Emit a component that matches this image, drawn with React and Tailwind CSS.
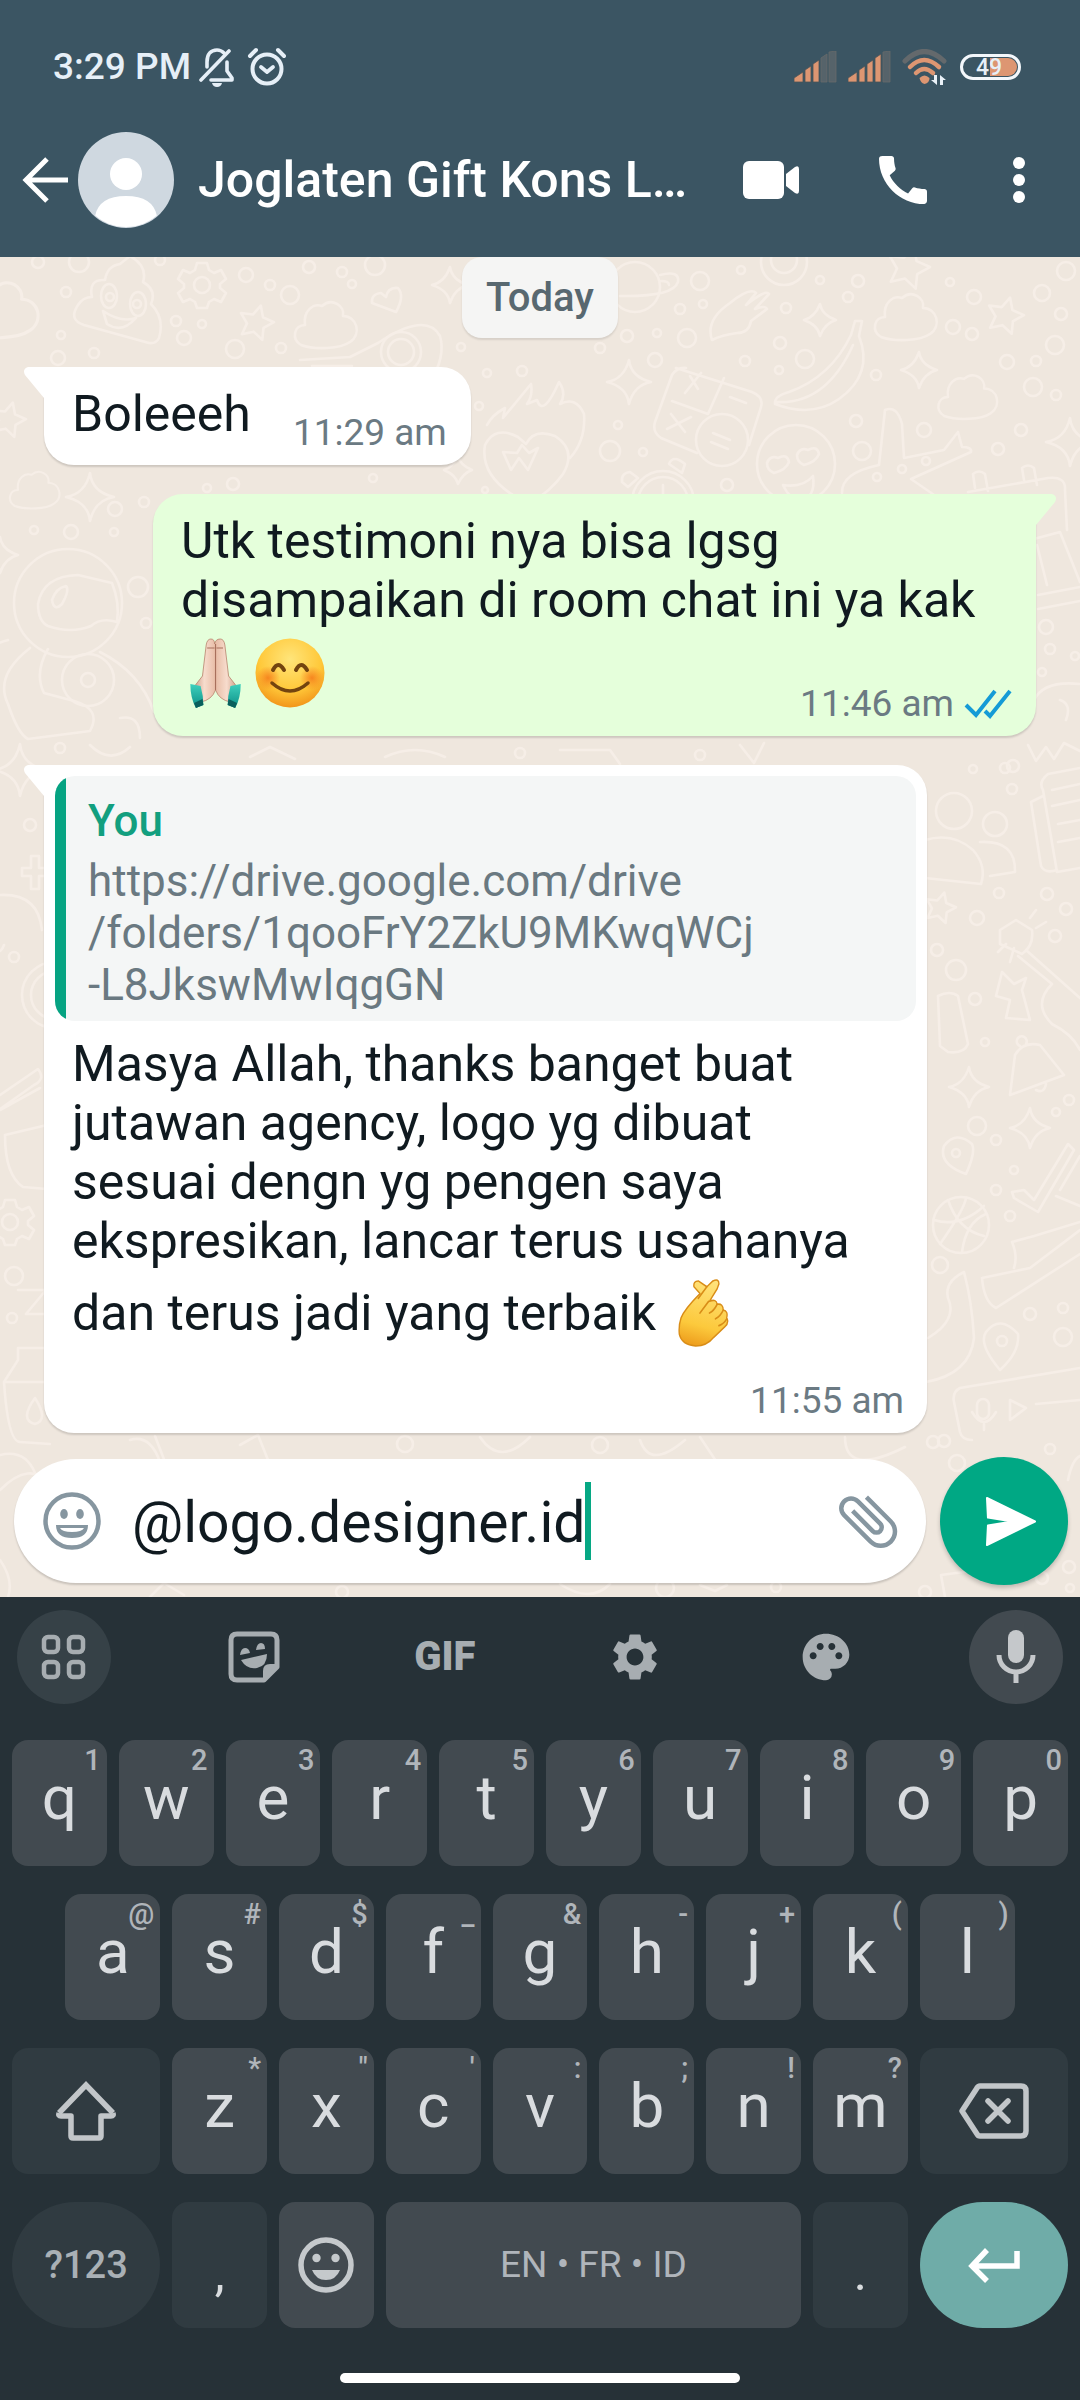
/* eslint-disable react/prop-types */
import { MdAttachFile, MdCall, MdMic, MdPalette, MdSettings } from "react-icons/md";

const topRow = [
    ["q", "1"], ["w", "2"], ["e", "3"], ["r", "4"], ["t", "5"],
    ["y", "6"], ["u", "7"], ["i", "8"], ["o", "9"], ["p", "0"],
];

const middleRow = [
    ["a", "@"], ["s", "#"], ["d", "$"], ["f", "_"], ["g", "&"],
    ["h", "-"], ["j", "+"], ["k", "("], ["l", ")"],
];

const bottomRow = [
    ["z", "*"], ["x", '"'], ["c", "'"], ["v", ":"], ["b", ";"], ["n", "!"], ["m", "?"],
];

// wallpaper doodles: [x, y, radius]
const dots = [
    [38, 262, 6], [79, 262, 10], [160, 260, 5], [246, 275, 7], [66, 292, 5], [309, 267, 6],
    [342, 272, 5], [270, 285, 5], [352, 284, 4], [375, 265, 10], [290, 295, 9], [176, 321, 5],
    [202, 324, 4], [61, 335, 4], [184, 338, 7], [58, 358, 7], [94, 353, 5], [235, 349, 9],
    [281, 348, 5], [461, 347, 4], [487, 373, 4], [522, 371, 5], [479, 406, 4], [233, 484, 6],
    [207, 488, 4], [144, 502, 5], [115, 509, 7], [34, 530, 4], [71, 532, 7], [114, 532, 4],
    [138, 587, 10], [146, 623, 5], [373, 478, 4], [485, 490, 3], [700, 281, 9], [741, 270, 4],
    [820, 280, 4], [858, 281, 6], [950, 282, 4], [974, 297, 7], [848, 297, 5], [680, 309, 5],
    [703, 304, 4], [786, 308, 5], [627, 336, 6], [657, 333, 4], [687, 338, 9], [780, 343, 6],
    [805, 359, 9], [600, 348, 5], [655, 360, 7], [745, 361, 5], [779, 370, 4], [876, 375, 5],
    [953, 327, 7], [972, 334, 6], [1066, 271, 9], [1042, 293, 8], [1061, 314, 6], [1055, 345, 9],
    [1007, 362, 7], [1036, 361, 5], [1033, 387, 9], [1056, 395, 5], [856, 421, 6], [924, 430, 7],
    [1021, 430, 6], [998, 449, 6], [862, 451, 9], [618, 425, 4], [610, 451, 10], [643, 452, 4],
    [727, 485, 6], [926, 461, 4], [902, 469, 4], [877, 477, 4], [1046, 627, 7], [1050, 649, 5],
    [1075, 656, 4], [1042, 672, 4], [30, 825, 6], [14, 957, 5], [14, 1276, 9], [12, 1318, 5],
    [1013, 766, 6], [1005, 768, 5], [973, 769, 4], [1012, 789, 5], [999, 893, 5], [1047, 894, 6],
    [1066, 909, 6], [977, 918, 7], [1055, 936, 6], [937, 950, 6], [956, 970, 10], [975, 999, 6],
    [985, 1042, 4], [1069, 1100, 5], [1056, 1112, 4], [977, 1126, 9], [996, 1140, 5],
    [1014, 1170, 4], [996, 1190, 5], [1010, 1216, 5], [940, 1265, 8], [1030, 1314, 6],
    [1063, 1308, 5], [1063, 1337, 9], [944, 1441, 6], [405, 1444, 8], [600, 1445, 8],
    [342, 1592, 6], [520, 753, 5], [700, 755, 5], [60, 748, 5], [1050, 1449, 5], [933, 1442, 6],
    [957, 1463, 8], [1069, 1567, 6], [1070, 1588, 4], [1042, 1578, 6], [925, 1592, 6], [665, 1588, 9],
    [776, 1587, 5],
];

const sparkles = [
    [450, 285, 18], [458, 470, 14], [90, 497, 24], [0, 555, 18], [820, 320, 16], [629, 382, 22],
    [919, 370, 18], [1070, 442, 24], [20, 770, 26], [969, 1087, 20], [1030, 1128, 20],
];

const stars = [
    [256, 323, 18], [8, 420, 18], [908, 268, 22], [1005, 316, 19], [940, 908, 16],
];

const clouds = [
    [325, 325, 1], [34, 490, 0.8], [905, 317, 1], [967, 397, 0.95], [0, 310, 1.2],
];

function starPoints(x, y, r) {
    const points = [];
    for (let i = 0; i < 10; i++) {
        const radius = i % 2 ? r * 0.5 : r;
        const angle = (Math.PI / 5) * i - 1.3;
        points.push(`${x + radius * Math.cos(angle)},${y + radius * Math.sin(angle)}`);
    }
    return points.join(" ");
}

function Gear({ x, y }) {
    return (
        <g transform={`translate(${x} ${y})`}>
            <circle r="8" />
            <path d="M-5-22h10l2 7 5 3 7-3 5 9-6 5v4l6 5-5 9-7-3-5 3-2 6h-10l-2-6-5-3-7 3-5-9 6-5v-4l-6-5 5-9 7 3 5-3z" />
        </g>
    );
}

function Wallpaper() {
    return (
        <svg
            className="absolute inset-0 h-full w-full"
            viewBox="0 257 1080 1340"
            preserveAspectRatio="xMidYMin slice"
            fill="none"
            stroke="#f6eee7"
            strokeWidth="2.6"
            strokeLinejoin="round"
            strokeLinecap="round"
            aria-hidden="true"
        >
            {dots.map(([x, y, r]) => (
                <circle key={`${x}-${y}`} cx={x} cy={y} r={r} />
            ))}
            {sparkles.map(([x, y, r]) => (
                <path
                    key={`${x}-${y}`}
                    d={`M${x} ${y - r}q2 ${r - 5} ${r} ${r}q${5 - r} 3 ${-r} ${r}q-2 ${5 - r} ${-r} ${-r}q${r - 5}-3 ${r} ${-r}z`}
                />
            ))}
            {stars.map(([x, y, r]) => (
                <polygon key={`${x}-${y}`} points={starPoints(x, y, r)} />
            ))}
            {clouds.map(([x, y, s]) => (
                <path
                    key={`${x}-${y}`}
                    transform={`translate(${x} ${y}) scale(${s})`}
                    d="M-24 20c-10-6-7-20 4-20-2-14 8-22 17-19 10-9 23 0 21 10 14 0 19 18 7 26-10 7-35 8-49 3z"
                />
            ))}
            <Gear x={202} y={285} />
            <Gear x={10} y={1222} />
            {/* smiling pile */}
            <path d="M105 280q2-14 15-16l10-8q18 10 13 26 14 8 8 22 14 14 8 34-3 6-10 5l-65-18q-16-5-6-20 5-8 14-8-4-18 13-17zM103 311q18 12 33 7-14 16-29 6z" />
            <ellipse cx="109" cy="296" rx="8" ry="12" />
            <ellipse cx="138" cy="304" rx="8" ry="12" />
            <circle cx="110" cy="297" r="4" />
            <circle cx="137" cy="304" r="4" />
            {/* hearts */}
            <path d="M372 303q-1-9 9-10l5 4q2-10 12-9 7 8-2 24l-24-9" />
            <path d="M485 445q10-20 33-8l8 7q8-16 29-8 22 14 8 38-12 17-34 30-50-24-44-59zM503 452l8 18 8-12 9 12 10-22-9 5-7-8-5 8z" />
            <path d="M487 425q5-10 18-17l-2 10 28-34q2 12-4 20l10-4q6 18 22-18 8 12 1 22 16-8 24 10 2 26-14 44" />
            {/* avocado */}
            <path d="M300 360l50-3 28-14q48-32 62-7 6 20-10 47M312 366h40" />
            <circle cx="401" cy="352" r="20" />
            <circle cx="401" cy="352" r="13" />
            {/* saturn */}
            <circle cx="635" cy="287" r="25" />
            <path d="M660 275q20-5 18 7-5 15-58 14M661 281q8 0 8 4" />
            <circle cx="784" cy="262" r="23" />
            <circle cx="784" cy="260" r="13" />
            {/* glove */}
            <path d="M712 340q-7-20 18-37 20-16 26-10l-10 12q20-16 23-11l-14 15q10-4 12 0l-16 12q-2 12-14 12-15 2-25 7z" />
            {/* banana */}
            <path d="M855 321l-4 14q-20 42-62 57-15 4-14 12 37 14 64-5 35-25 20-63l3-15zM776 402q50 3 77-57" />
            {/* calculator */}
            <path d="M676 368l76 24q12 5 9 15l-12 38M697 453l-36-15q-9-6-6-16l17-47q5-8 14-7M724 378l-16 36-36-13M690 376l8 13m3-16l-16 20M730 397l16 6M671 414l14 18m6-15l-24 12" />
            <circle cx="722" cy="440" r="26" />
            <path d="M713 433l17 7m-19 2l17 7" />
            {/* face with heart eyes */}
            <circle cx="796" cy="464" r="39" />
            <path d="M767 463q3-8 11-5 9-5 11 4-3 8-15 11-7-3-7-10zM797 455q3-8 11-5 9-5 11 4-3 8-15 11-7-3-7-10zM783 485q20 3 30-9 3 22-13 24-10 0-17-15z" />
            {/* scissors */}
            <path d="M842 493q-1-20 37-28l6-55q12-5 17 14l2 34 40-8 14-18 4 15q10 0 9 5l-60 27 29 20" />
            {/* alarm clock */}
            <circle cx="663" cy="502" r="31" />
            <circle cx="663" cy="502" r="25" />
            <path d="M669 464q4-10 16 0l-3 9zM622 482q-1-9 8-10l8 6-10 9zM663 485v12h8" />
            <path d="M968 492l80-14q18-2 17 12l2 40M975 488l-2-14q6-5 12 0l3 17M1024 480l-2-12q6-5 12 0l3 17M1030 540l30-8 20 50M1037 545l10 40" />
            <path d="M1038 595l42-8m-42 22l42-8M1028 745l8 16 10-14 8 12 10-16 16 8M1034 700q10-20 46-16M1060 700q12 4 6 20" />
            {/* astronaut */}
            <circle cx="68" cy="603" r="54" />
            <path d="M48 626q-10-5-10-22 5-28 40-29l34 8q8 20 5 39-16-5-26 4-20 8-43 0zM52 600q4-12 14-14 4 4-4 18-8 8-10-4z" />
            <path d="M30 648q-36 28-22 56 10 30 20 35l62-8q12-22-16-30l-30-8q-10-20 4-44M100 652q40 20 54 60M8 640q-20 5-26 20M120 718q20-4 20 20" />
            <circle cx="88" cy="680" r="26" />
            <circle cx="88" cy="680" r="7" />
            {/* left edge */}
            <path d="M22 868h9v-12h8v12h9v8h-9v13h-8v-13h-9zM0 895q38-2 42 35M-10 940q8 20 14 5" />
            <circle cx="55" cy="995" r="33" />
            <circle cx="55" cy="995" r="24" />
            <path d="M0 1095l38-26q8 10-4 16l-34 24M0 1110l40-22M5 1135l42-10M5 1135q0 40 18 52l24 2M18 1290h28l-20 24h22" />
            <path d="M4 1382l14-22v-12h26M4 1382q4 60 16 60l30 2M4 1382h40M35 1398q-16 22 0 26 14-4 0-26z" />
            <path d="M0 1455q25-6 35 18M130 1440q20-6 30 22M155 1436l10 26M480 1437q20 30 50 0M240 1445l18-10 12 30M640 1440q10 30 45 0M700 1437l20 30M845 1437q0 40 60 10" />
            <path d="M385 757q30-14 60 0M250 757l20-10 25 12M560 750h50l10 14M740 745l14 18 10-20M90 745q20 20 40 2" />
            {/* right edge */}
            <circle cx="954" cy="811" r="18" />
            <circle cx="995" cy="824" r="12" />
            <path d="M925 840q28-8 48 10 14 16 8 34l-56-6M980 842q36-2 35 30l-25 4" />
            <path d="M1080 768l-32 6q-10 8-5 16l14 82 23-4M1043 796l-12 6 10 64q4 8 16 4M1052 790l28-6m-28 22l28-6m-22 24l22-4m-22 22l22-4" />
            <path d="M1000 930l16-10 16 10q2 16-10 24l-22-10zM1026 950l54 48M1018 956l34 28q-20 20 0 40 20 10 28 26M1006 944l-8 8m16-4l-4 14m20-44l6-8m0 18l10-6" />
            <path d="M1002 972l-6 24 14 4-4 18 24 2-8-30 4-12-12 6zM938 996q12-6 20 0l10 48q-4 10-20 8l-8-6z" />
            <path d="M1010 1095l5-40q8-14 25-10l24 30zM1020 1046a5 5 0 1 1 6-2M1036 1090q8 4 10-6" />
            <path d="M966 1174q-28-10-22-28 12-16 28-2 4 8-6 30zM1000 1370q-22-26-14-38 14-18 32 2 2 18-18 36z" />
            <circle cx="956" cy="1153" r="4" />
            <circle cx="1002" cy="1341" r="5" />
            <path d="M1012 1192l12-2 10 10 34-56 6 6-36 62-24-14zM1056 1196l24 10M1060 1190l20-34" />
            <circle cx="961" cy="1225" r="28" />
            <path d="M934 1220q26 8 50-14M940 1244q24-34 26-46M962 1252q4-30 24-38M948 1200q10 30 36 36" />
            <path d="M982 1278l48-10 50-38M982 1278q2 24 14 30l84-54M1012 1242l22-6 46-14M1012 1242q6 14 2 26" />
            <path d="M964 1272q-20 10-16 26 10 22-20 40M964 1272q8 30 10 66-4 36-48 44" />
            <path d="M1080 1368l-120 20q-8 4-6 14l6 30q2 8 12 8M1010 1400v20l16-12zM1036 1404l44-4" />
            <rect x="977" y="1399" width="12" height="20" rx="6" />
            <path d="M972 1412q12 20 24 0M984 1424v6" />
            <path d="M0 1490q30-30 50-6M0 1560q14 20 8 37M1068 1480q4-20 12-24M150 1597l14-14 20 12M560 1584q30 20 50 0M700 1585l15 6 12-6M945 1597l-4-22 30-4" />
        </svg>
    );
}

function SignalIcon({ level }) {
    const bars = ["M0 27l9-6v10H0z", "M11 19l6-4v16h-6z", "M19 13l6-4v22h-6z", "M27 7l6-4v28h-6z", "M35 1l7-1v31h-7z"];
    return (
        <svg className="h-8 w-11" viewBox="0 0 44 32" aria-hidden="true">
            {bars.map((d, index) => (
                <path
                    key={d}
                    d={d}
                    fill={index < level ? "#dd9672" : "#56636a"}
                    stroke={index < level ? "#4c5357" : "#67696a"}
                    strokeWidth="0.8"
                />
            ))}
        </svg>
    );
}

function WifiIcon() {
    return (
        <svg className="h-9 w-12" viewBox="0 0 48 36" fill="none" strokeLinecap="round" aria-hidden="true">
            <path d="M3 12Q22-7 42 12" stroke="#64696c" strokeWidth="5" />
            <path d="M8 18Q22 4 37 18" stroke="#dd9672" strokeWidth="4.5" />
            <path d="M14 24q8-8 17 0" stroke="#dd9672" strokeWidth="4.5" />
            <path d="M17.500 29q5-5 10 0 0 5-5 6-4-1-5-6z" fill="#dd9672" />
            <path d="M35 26v10l-6-5h3v-5zM38 36V26l6 5h-3v5z" fill="#eaf1f8" />
        </svg>
    );
}

function StatusBar() {
    return (
        <div className="flex h-[50px] items-center pl-[53px] pr-[59px] text-[#e6eff7]">
            <span className="text-[37px] font-medium leading-[50px]">3:29 PM</span>
            <svg className="ml-2 h-10 w-9" viewBox="0 0 36 40" fill="none" stroke="currentColor" strokeWidth="3.6" strokeLinejoin="round" strokeLinecap="round" aria-hidden="true">
                <path d="M2 33L30 4" />
                <path d="M8 20v-5C8 7 12 3 18 3c3 0 5 1 7 3" />
                <path d="M28 15v9l5 7v2H12" />
                <path d="M13 36h10q-1 4-5 4t-5-4z" fill="currentColor" stroke="none" />
            </svg>
            <svg className="ml-3 h-10 w-10" viewBox="0 0 40 40" fill="none" stroke="currentColor" strokeLinecap="round" strokeLinejoin="round" aria-hidden="true">
                <circle cx="20" cy="22" r="14.500" strokeWidth="4" />
                <path d="M14 20l6 5 6-5" strokeWidth="3.800" />
                <path d="M3 9l6-6M37 9l-6-6" strokeWidth="4" />
            </svg>
            <div className="ml-auto flex items-center gap-[10px]">
                <SignalIcon level={3} />
                <SignalIcon level={4} />
                <WifiIcon />
                <span className="flex h-[26px] w-[61px] rounded-full border-[3px] border-[#f3f7fb] p-px">
                    <span className="w-full rounded-full bg-linear-to-r from-transparent from-50% to-[#dd9672] to-50% pl-3 text-[23px] font-medium leading-[20px]">
                        49
                    </span>
                </span>
            </div>
        </div>
    );
}

function ChatHeader() {
    return (
        <header className="bg-[#3b5563] pb-[29px] pt-[42px] text-white">
            <StatusBar />
            <div className="mt-10 flex items-center pl-[22px] pr-[55px]">
                <button type="button" aria-label="Back">
                    <svg className="h-12 w-12" viewBox="0 0 48 48" fill="none" stroke="currentColor" strokeWidth="5" aria-hidden="true">
                        <path d="M25 3L4 24l21 21M4 24h42" />
                    </svg>
                </button>
                <svg className="ml-2 size-24 shrink-0" viewBox="0 0 96 96" aria-hidden="true">
                    <clipPath id="avatar">
                        <circle cx="48" cy="48" r="47" />
                    </clipPath>
                    <circle cx="48" cy="48" r="48" fill="#cfd8e0" />
                    <circle cx="48" cy="42" r="16" fill="#fff" />
                    <path clipPath="url(#avatar)" d="M17 84q4-20 31-20t31 20v12H17z" fill="#fff" />
                </svg>
                <h1 className="ml-6 min-w-0 flex-1 truncate text-[50px] font-medium leading-[60px]">
                    Joglaten Gift Kons L…
                </h1>
                <div className="flex items-center">
                    <button type="button" aria-label="Video call">
                        <svg className="h-[38px] w-14" viewBox="0 0 56 38" fill="currentColor" aria-hidden="true">
                            <rect y="0" width="41" height="38" rx="6" />
                            <path d="M43 13l9-7q4-2 4 2v22q0 4-4 2l-9-7z" />
                        </svg>
                    </button>
                    <button type="button" aria-label="Voice call" className="ml-20">
                        <MdCall className="size-16 -mx-2" />
                    </button>
                    <button type="button" aria-label="More options" className="ml-[86px]">
                        <svg className="h-12 w-3" viewBox="0 0 12 48" fill="currentColor" aria-hidden="true">
                            <circle cx="6" cy="7" r="6" />
                            <circle cx="6" cy="24" r="6" />
                            <circle cx="6" cy="41" r="6" />
                        </svg>
                    </button>
                </div>
            </div>
        </header>
    );
}

function FoldedHands() {
    return (
        <svg className="size-[70px]" viewBox="-2 0 75 70" preserveAspectRatio="none" role="img" aria-label="folded hands">
            <defs>
                <linearGradient id="palm" x1="0" x2="1">
                    <stop offset="0" stopColor="#c9977f" />
                    <stop offset="0.250" stopColor="#f7dccd" />
                    <stop offset="0.480" stopColor="#e9bfa9" />
                    <stop offset="0.520" stopColor="#e9bfa9" />
                    <stop offset="0.750" stopColor="#f7dccd" />
                    <stop offset="1" stopColor="#c9977f" />
                </linearGradient>
                <linearGradient id="cuff" x1="0" y1="0" x2="0" y2="1">
                    <stop offset="0" stopColor="#3fd0bd" />
                    <stop offset="1" stopColor="#0b8f86" />
                </linearGradient>
            </defs>
            <path d="M34 6q0-5-4-5-4 0-5 6l-4 31-10 12 8 14q12-2 16-12 4 10 16 12l8-14-10-12-4-31q-1-6-5-6-5 0-6 5z" fill="url(#palm)" stroke="#b5806a" strokeWidth="0.8" />
            <path d="M35 6v46M26 10h8m2 0h7" stroke="#a8705c" strokeWidth="1.2" fill="none" />
            <path d="M8 46l11 2q3 10 3 19l-8 3q-6-10-6-24zM62 46l-11 2q-3 10-3 19l8 3q6-10 6-24z" fill="url(#cuff)" />
            <path d="M14 70l8-3-1-6-9 4zM56 70l-8-3 1-6 9 4z" fill="#0a5f5c" />
        </svg>
    );
}

function SmilingFace() {
    return (
        <svg className="size-[70px]" viewBox="0 0 70 70" role="img" aria-label="smiling face">
            <defs>
                <radialGradient id="face" cx="0.5" cy="0.3" r="0.7">
                    <stop offset="0" stopColor="#ffe57a" />
                    <stop offset="0.65" stopColor="#ffc839" />
                    <stop offset="1" stopColor="#f2951a" />
                </radialGradient>
                <radialGradient id="cheek">
                    <stop offset="0" stopColor="#f57f1c" stopOpacity="0.9" />
                    <stop offset="1" stopColor="#f57f1c" stopOpacity="0" />
                </radialGradient>
            </defs>
            <circle cx="35" cy="35" r="34.500" fill="url(#face)" />
            <circle cx="13" cy="40" r="12" fill="url(#cheek)" />
            <circle cx="57" cy="40" r="12" fill="url(#cheek)" />
            <g fill="none" stroke="#73440f" strokeLinecap="round">
                <path d="M18 32q5-10 11 0M41 32q5-10 11 0" strokeWidth="4" />
                <path d="M17 45q18 16 36 0" strokeWidth="3.500" />
            </g>
        </svg>
    );
}

function FingerHeart() {
    return (
        <svg className="my-2 inline size-[68px] align-[-25px]" viewBox="-2 0 79 70" preserveAspectRatio="none" role="img" aria-label="hand with index finger and thumb crossed">
            <defs>
                <linearGradient id="hand" x1="0.600" y1="0" x2="0.400" y2="1">
                    <stop offset="0" stopColor="#ffe27a" />
                    <stop offset="0.700" stopColor="#fcc93c" />
                    <stop offset="1" stopColor="#ee9f1e" />
                </linearGradient>
            </defs>
            <path
                d="M34 15l-7-7q-1-6 5-6l10 6 7-6q7-3 7 3l-2 5-9 13q8-3 9 3 7-1 7 6 6 1 4 8 3 5-2 9L50 60q-8 9-21 9-16-1-19-12-1-9 2-17 4-9 22-25z"
                fill="url(#hand)"
                stroke="#d98d17"
                strokeWidth="1.600"
                strokeLinejoin="round"
            />
            <path d="M44 23l-10 12M54 26q-4 7-9 9m16-3q-3 6-9 9m13 0q-3 5-9 7M42 8L32 20" fill="none" stroke="#d98d17" strokeWidth="1.800" strokeLinecap="round" />
        </svg>
    );
}

function Bubble({ sent, children }) {
    return (
        <article
            className={
                sent
                    ? "relative max-w-[883px] self-end rounded-[30px] rounded-tr-none bg-[#e5ffdb] pb-[10px] shadow-[0_2px_2px_rgba(0,0,0,0.14)]"
                    : "relative max-w-[883px] self-start rounded-[30px] rounded-tl-none bg-white pb-[10px] shadow-[0_2px_2px_rgba(0,0,0,0.14)]"
            }
        >
            <svg
                className={sent ? "absolute left-full top-0 h-8 w-5 text-[#e5ffdb]" : "absolute right-full top-0 h-8 w-5 -scale-x-100 text-white"}
                viewBox="0 0 20 32"
                fill="currentColor"
                aria-hidden="true"
            >
                <path d="M0 0h16q6 2 3 8L0 31z" />
            </svg>
            {children}
        </article>
    );
}

function Time({ children }) {
    return <time className="text-[37px] leading-[44px] text-[#6b7a83]">{children}</time>;
}

function Chat() {
    return (
        <section className="flex flex-col items-center gap-[29px] px-11">
            <div className="rounded-[20px] bg-[#f5f5f4] px-6 py-[15px] text-[40px] font-medium leading-[51px] text-[#586870] shadow-[0_2px_2px_rgba(0,0,0,0.1)]">
                Today
            </div>

            <Bubble>
                <div className="flex items-end gap-[42px] pl-7 pr-6 pt-[18px]">
                    <p className="pb-[11px] text-[50px] leading-[59px]">Boleeeh</p>
                    <Time>11:29 am</Time>
                </div>
            </Bubble>

            <Bubble sent>
                <div className="pl-7 pr-6 pt-[18px]">
                    <p className="text-[50px] leading-[59px]">
                        Utk testimoni nya bisa lgsg disampaikan di room chat ini ya kak
                    </p>
                    <div className="flex items-end justify-between">
                        <div className="flex gap-1 pb-[18px] pt-2">
                            <FoldedHands />
                            <SmilingFace />
                        </div>
                        <div className="flex items-center gap-[10px]">
                            <Time>11:46 am</Time>
                            <svg className="h-8 w-12" viewBox="0 0 48 32" fill="none" stroke="#159bd6" strokeWidth="4" role="img" aria-label="Read">
                                <path d="M2 17l10 10L31 3M21 23l5 5L46 3" />
                            </svg>
                        </div>
                    </div>
                </div>
            </Bubble>

            <Bubble>
                <div className="px-[11px] pt-[11px]">
                    <blockquote className="overflow-hidden rounded-[20px] bg-[#f4f6f6]">
                        <div className="border-l-[11px] border-[#06a382] pb-[10px] pl-[22px] pt-[19px] text-[44px] leading-[52px]">
                            <p className="font-medium text-[#129f7f]">You</p>
                            <p className="mt-2 text-[#6a7981]">
                                https://drive.google.com/drive
                                <br />
                                /folders/1qooFrY2ZkU9MKwqWCj
                                <br />
                                -L8JkswMwIqgGN
                            </p>
                        </div>
                    </blockquote>
                    <p className="mt-[14px] px-[17px] text-[50px] leading-[59px]">
                        Masya Allah, thanks banget buat jutawan agency, logo yg dibuat sesuai dengn yg
                        pengen saya ekspresikan, lancar terus usahanya dan terus jadi yang terbaik{" "}
                        <FingerHeart />
                    </p>
                    <div className="mt-6 flex justify-end pr-3">
                        <Time>11:55 am</Time>
                    </div>
                </div>
            </Bubble>
        </section>
    );
}

function Composer() {
    return (
        <form className="mt-6 flex items-center gap-[14px] pb-3 pl-[14px] pr-3" onSubmit={(event) => event.preventDefault()}>
            <div className="flex h-[124px] min-w-0 flex-1 items-center rounded-full bg-white pl-[28px] pr-[22px] text-[#8696a0] shadow-[0_2px_2px_rgba(0,0,0,0.16)]">
                <button type="button" aria-label="Emoji">
                    <svg className="size-[60px]" viewBox="0 0 60 60" fill="currentColor" aria-hidden="true">
                        <circle cx="30" cy="30" r="26.500" fill="none" stroke="currentColor" strokeWidth="4.500" />
                        <ellipse cx="22" cy="23" rx="3.800" ry="5" />
                        <ellipse cx="38" cy="23" rx="3.800" ry="5" />
                        <path d="M14 34h32q0 13-16 13T14 34z" />
                        <path d="M18 37h24q-2 4-12 4t-12-4z" fill="#fff" />
                    </svg>
                </button>
                {/* the input is as wide as its text so the caret bar follows it */}
                <input
                    type="text"
                    aria-label="Message"
                    defaultValue="@logo.designer.id"
                    className="ml-[30px] field-sizing-content min-w-0 pt-1 text-[57px] leading-[76px] text-[#101a20] outline-none"
                />
                <span className="h-[78px] w-[6px] shrink-0 bg-[#06a884]" />
                <button type="button" aria-label="Attach" className="ml-auto">
                    <MdAttachFile className="size-[72px] -rotate-45" />
                </button>
            </div>
            <button type="submit" aria-label="Send" className="flex size-32 shrink-0 items-center justify-center rounded-full bg-[#00a884] text-white shadow-[0_3px_4px_rgba(0,0,0,0.2)]">
                <svg className="ml-3 size-[51px]" viewBox="0 0 52 52" fill="currentColor" stroke="currentColor" strokeWidth="2" strokeLinejoin="round" aria-hidden="true">
                    <path d="M2 2l49 24L2 50l1-20 25-4L3 22z" />
                </svg>
            </button>
        </form>
    );
}

function Key({ letter, hint }) {
    return (
        <button type="button" className="relative col-span-2 mx-1.5 h-[126px] rounded-2xl bg-[#424a50] pb-3 text-[62px] text-[#d9dcdf]">
            {letter}
            <span className="absolute right-[6px] top-[5px] text-[29px] font-medium leading-[30px] text-[#b0b5ba]">{hint}</span>
        </button>
    );
}

function Toolbar() {
    return (
        <div className="flex justify-between px-[17px] text-[#a7adb1]">
            <button type="button" aria-label="Menu" className="flex size-[94px] items-center justify-center rounded-full bg-[#364147]">
                <svg className="size-[46px]" viewBox="0 0 46 46" fill="none" stroke="currentColor" strokeWidth="4.500" aria-hidden="true">
                    <rect x="3" y="3" width="14" height="15" rx="4" />
                    <rect x="28" y="3" width="14" height="15" rx="4" />
                    <rect x="3" y="28" width="14" height="15" rx="4" />
                    <rect x="28" y="28" width="14" height="15" rx="4" />
                </svg>
            </button>
            <button type="button" aria-label="Stickers" className="flex size-[94px] items-center justify-center">
                <svg className="size-[52px]" viewBox="0 0 52 52" fill="none" stroke="currentColor" strokeWidth="5" strokeLinejoin="round" aria-hidden="true">
                    <path d="M9 3h34q6 0 6 6v27L36 49H9q-6 0-6-6V9q0-6 6-6z" />
                    <path d="M49 34h-7q-6 0-6 6v9z" fill="currentColor" strokeWidth="2" />
                    <path d="M12 24q1-7 5-7t5 5zM28 19q1-7 5-7t4 6zM13 29l26-6q0 12-10 14-10 2-16-8z" fill="currentColor" stroke="none" />
                </svg>
            </button>
            <button type="button" className="size-[94px] text-[40px] font-black">
                GIF
            </button>
            <button type="button" aria-label="Settings" className="flex size-[94px] items-center justify-center">
                <MdSettings className="size-14" />
            </button>
            <button type="button" aria-label="Theme" className="flex size-[94px] items-center justify-center">
                <MdPalette className="size-14" />
            </button>
            <button type="button" aria-label="Voice typing" className="flex size-[94px] items-center justify-center rounded-full bg-[#424a50] text-[#c5c8cb]">
                <svg className="h-[54px] w-10" viewBox="0 0 40 54" fill="none" stroke="currentColor" strokeWidth="5" aria-hidden="true">
                    <rect x="12" y="0" width="16" height="33" rx="8" fill="currentColor" stroke="none" />
                    <path d="M3 25a17 17 0 0 0 34 0M20 41v12" />
                </svg>
            </button>
        </div>
    );
}

function Keyboard() {
    return (
        <section aria-label="Keyboard" className="bg-[#263137] pb-[17px] pt-[13px]">
            <Toolbar />
            <div className="mt-9 grid grid-cols-20 gap-y-7 px-1.5">
                {topRow.map(([letter, hint]) => (
                    <Key key={letter} letter={letter} hint={hint} />
                ))}

                <span />
                {middleRow.map(([letter, hint]) => (
                    <Key key={letter} letter={letter} hint={hint} />
                ))}
                <span />

                <button type="button" aria-label="Shift" className="col-span-3 mx-1.5 flex h-[126px] items-center justify-center rounded-2xl bg-[#303b41] text-[#c2c6c9]">
                    <svg className="h-[60px] w-[62px]" viewBox="0 0 62 60" fill="none" stroke="currentColor" strokeWidth="5.500" strokeLinejoin="round" aria-hidden="true">
                        <path strokeLinejoin="miter" d="M4 32L31 4l27 28" />
                        <path d="M4 32q-1 3 2 3h10v20q0 2 2 2h26q2 0 2-2V35h10q3 0 2-3" />
                    </svg>
                </button>
                {bottomRow.map(([letter, hint]) => (
                    <Key key={letter} letter={letter} hint={hint} />
                ))}
                <button type="button" aria-label="Backspace" className="col-span-3 mx-1.5 flex h-[126px] items-center justify-center rounded-2xl bg-[#303b41] text-[#c2c6c9]">
                    <svg className="h-14 w-[70px]" viewBox="0 0 70 56" fill="none" stroke="currentColor" strokeWidth="5.500" strokeLinejoin="round" strokeLinecap="round" aria-hidden="true">
                        <path d="M21 3h41q5 0 5 5v40q0 5-5 5H21q-2 0-3-2L3 28 18 5q1-2 3-2z" />
                        <path d="M29 18l20 20M49 18L29 38" />
                    </svg>
                </button>

                <button type="button" className="col-span-3 mx-1.5 h-[126px] rounded-full bg-[#303b41] text-[38px] font-medium text-[#a9b0b5]">
                    ?123
                </button>
                <button type="button" className="col-span-2 mx-1.5 h-[126px] rounded-2xl bg-[#303b41] pt-4 text-[50px] text-[#d9dcdf]">
                    ,
                </button>
                <button type="button" aria-label="Emoji keyboard" className="col-span-2 mx-1.5 flex h-[126px] items-center justify-center rounded-2xl bg-[#424a50] text-[#c5c9cc]">
                    <svg className="size-14" viewBox="0 0 56 56" fill="currentColor" aria-hidden="true">
                        <circle cx="28" cy="28" r="25" fill="none" stroke="currentColor" strokeWidth="5.500" />
                        <circle cx="18.500" cy="21" r="4.200" />
                        <circle cx="37.500" cy="21" r="4.200" />
                        <path d="M14 33h28q-4 10-14 10T14 33z" />
                    </svg>
                </button>
                <button type="button" className="col-span-8 mx-1.5 h-[126px] rounded-2xl bg-[#424a50] text-[37px] text-[#b0b5bb]">
                    EN • FR • ID
                </button>
                <button type="button" className="col-span-2 mx-1.5 h-[126px] rounded-2xl bg-[#303b41] pt-4 text-[50px] text-[#d9dcdf]">
                    .
                </button>
                <button type="button" aria-label="Enter" className="col-span-3 mx-1.5 flex h-[126px] items-center justify-center rounded-full bg-[#6faca8] text-white">
                    <svg className="h-9 w-[54px]" viewBox="0 0 54 36" fill="none" stroke="currentColor" strokeWidth="5.500" aria-hidden="true">
                        <path d="M20 3L5 19l15 15M5 19h45V4" />
                    </svg>
                </button>
            </div>
            <div className="mx-auto mt-[45px] h-[10px] w-[37%] rounded-full bg-white" />
        </section>
    );
}

export default function App() {
    return (
        <div className="flex min-h-screen flex-col bg-[#263137] font-['Roboto','Liberation_Sans',sans-serif] text-[#101a20]">
            <ChatHeader />
            <main className="relative bg-[#efe7de]">
                <Wallpaper />
                <div className="relative">
                    <Chat />
                    <Composer />
                </div>
            </main>
            <Keyboard />
        </div>
    );
}
